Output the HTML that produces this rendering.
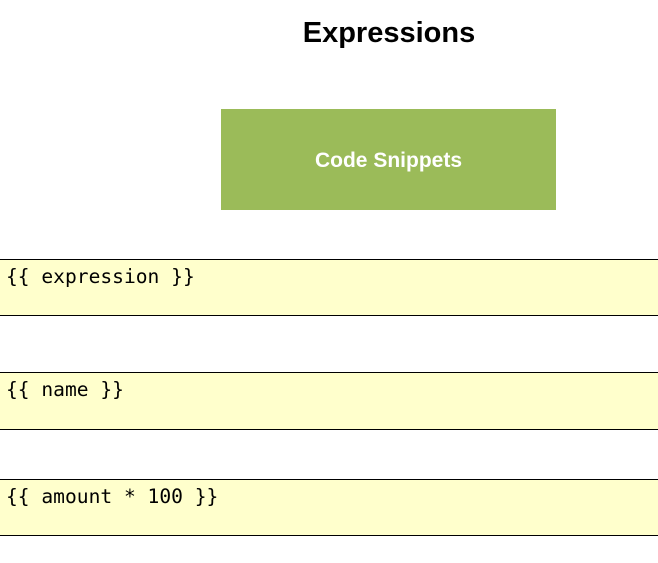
<!DOCTYPE html>
<html><head><meta charset="utf-8"><style>
html,body{margin:0;padding:0;background:#fff;width:658px;height:563px;overflow:hidden;position:relative}
h1{position:absolute;left:0;width:778px;top:13px;margin:0;text-align:center;font:bold 29px/40px "Liberation Sans",sans-serif;color:#000}
.btn{position:absolute;left:221px;top:109px;width:335px;height:101px;background:#9bbb59;color:#fff;font:bold 21px/103px "Liberation Sans",sans-serif;text-align:center}
.code{position:absolute;left:0;width:658px;height:55px;background:#ffffcc;border-top:1px solid #000;border-bottom:1px solid #000;font:19.6px/22px "DejaVu Sans Mono",monospace;color:#000;box-sizing:border-box;padding:6px 0 0 6px;white-space:pre}
</style></head><body>
<h1>Expressions</h1>
<div class="btn">Code Snippets</div>
<div class="code" style="top:259px;height:57px">{{ expression }}</div>
<div class="code" style="top:372px;height:58px">{{ name }}</div>
<div class="code" style="top:479px;height:57px">{{ amount * 100 }}</div>
</body></html>
